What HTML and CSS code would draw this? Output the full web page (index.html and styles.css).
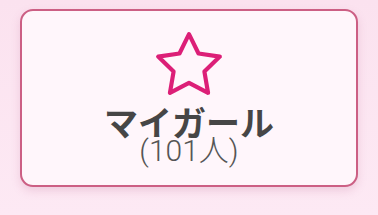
FILE: index.html
```html
<!DOCTYPE html>
<html lang="ja">
<head>
<meta charset="utf-8">
<link rel="stylesheet" href="styles.css">
</head>
<body>
<div class="page">
  <div class="card">
    <svg class="star" width="74" height="74" viewBox="0 0 24 24" aria-hidden="true">
      <polygon points="12,2 15.09,8.26 22,9.27 17,14.14 18.18,21.02 12,17.77 5.82,21.02 7,14.14 2,9.27 8.91,8.26" fill="none" stroke="#dc1f77" stroke-width="1.35" stroke-linejoin="round"/>
    </svg>
    <div class="title">マイガール</div>
    <div class="count">(101人)</div>
  </div>
</div>
</body>
</html>
```
FILE: styles.css
```css
html, body {
  margin: 0;
  padding: 0;
}
body {
  width: 378px;
  height: 215px;
  background: linear-gradient(180deg, #fbe2ef 0%, #fde9f4 100%);
  font-family: Roboto, "Noto Sans CJK JP", sans-serif;
  overflow: hidden;
}
.page {
  padding: 9px 20px 0 20px;
}
.card {
  box-sizing: border-box;
  height: 178px;
  border: 2.5px solid #cc5f84;
  border-radius: 13px;
  background: #fff6fb;
  box-shadow: 0 4px 8px rgba(200, 120, 160, 0.25);
  display: flex;
  flex-direction: column;
  align-items: center;
  padding-top: 17px;
}
.star {
  display: block;
}
.title {
  font-family: "Noto Sans CJK JP", sans-serif;
  font-weight: 700;
  font-size: 34px;
  line-height: 30px;
  color: #464646;
  margin-top: 5px;
}
.count {
  font-size: 30px;
  line-height: 28px;
  color: #555555;
  font-weight: 300;
}
```
